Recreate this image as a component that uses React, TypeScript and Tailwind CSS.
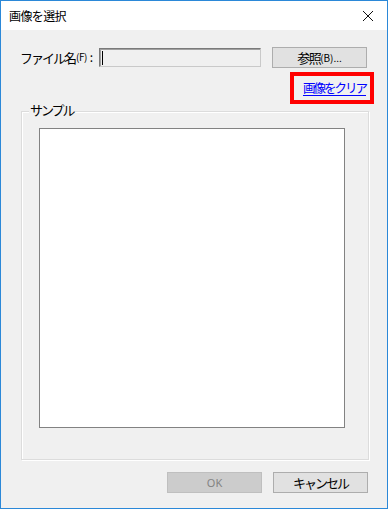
import React from "react";

const jp = { fontFamily: '"Noto Sans CJK JP", "Noto Sans", sans-serif' } as React.CSSProperties;

export default function App() {
  return (
    <div
      className="w-[388px] h-[509px] border border-[#2b88d8] flex flex-col bg-[#f0f0f0] text-black"
      style={jp}
    >
      <div className="h-[29px] bg-white flex items-center justify-between pl-[8px] pr-[13px]">
        <span className="text-[12px] tracking-[-0.6px] leading-none">画像を選択</span>
        <svg width="12" height="12" viewBox="0 0 12 12">
          <path d="M1 1 L11 11 M11 1 L1 11" stroke="#111" strokeWidth="1" fill="none" />
        </svg>
      </div>

      <div className="flex-1 flex flex-col">
        <div className="flex items-start mt-[17px] pl-[19px]">
          <div className="w-[79px] h-[20px] flex items-center whitespace-nowrap">
            <span className="text-[13px] tracking-[-2px] leading-none">ファイル名</span>
            <span className="text-[10px] tracking-[-0.5px] leading-none ml-[1px]">(F)</span>
            <span className="text-[12px] leading-none ml-[3px]">:</span>
          </div>
          <div className="mt-[1px] w-[162px] h-[19px] bg-[#f0f0f0] border border-t-[#7a7a7a] border-l-[#7a7a7a] border-r-[#c9c9c9] border-b-[#c9c9c9] shadow-[inset_1px_1px_0_#a0a0a0] flex items-center pl-[2px]">
            <div className="w-[1px] h-[14px] bg-black" />
          </div>
          <button className="ml-[11px] w-[95px] h-[21px] bg-[#e1e1e1] border border-[#adadad] flex items-center justify-center">
            <span className="text-[13px] tracking-[-1.5px] leading-none">参照</span>
            <span className="text-[10px] leading-none">(B)...</span>
          </button>
        </div>

        <div className="flex justify-end pr-[13px] mt-[4px]">
          <div className="w-[84px] h-[32px] border-[4px] border-[#ff0000] flex items-center justify-end pr-[4px]">
            <span className="text-[12.5px] tracking-[-2px] leading-none text-[#0000ff] underline underline-offset-2">
              画像をクリア
            </span>
          </div>
        </div>

        <div className="relative ml-[20px] mt-[7px] w-[348px] h-[349px] border border-[#dcdcdc] shadow-[inset_1px_1px_0_#ffffff,1px_1px_0_#ffffff] pt-[16px] pl-[17px]">
          <span className="absolute left-[7px] -top-[9px] bg-[#f0f0f0] px-[1px] text-[13px] tracking-[-2px] leading-none">
            サンプル
          </span>
          <div className="w-[306px] h-[300px] bg-white border border-[#828282]" />
        </div>

        <div className="flex justify-end gap-[11px] pr-[19px] mt-[12px]">
          <button className="w-[95px] h-[21px] bg-[#cccccc] border border-[#bfbfbf] flex items-center justify-center">
            <span className="text-[11px] leading-none text-[#838383]" style={{ fontFamily: '"Noto Sans", sans-serif' }}>OK</span>
          </button>
          <button className="w-[95px] h-[21px] bg-[#e1e1e1] border border-[#adadad] flex items-center justify-center">
            <span className="text-[13px] tracking-[-2px] leading-none">キャンセル</span>
          </button>
        </div>
      </div>
    </div>
  );
}
